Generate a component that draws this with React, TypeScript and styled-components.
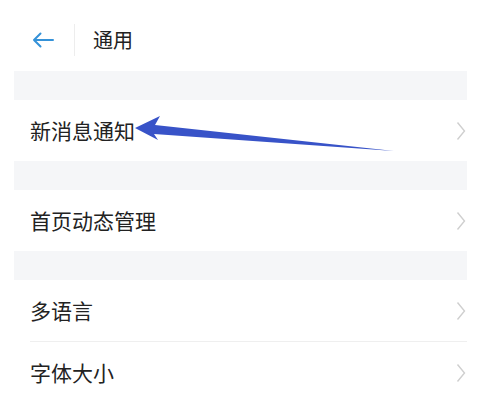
import React from 'react'
import styled, { createGlobalStyle } from 'styled-components'

const GlobalStyle = createGlobalStyle`
  html, body {
    margin: 0;
    padding: 0;
    background: #ffffff;
  }
  body {
    font-family: "Noto Sans CJK SC", "Noto Sans", sans-serif;
    color: #222222;
  }
`

const Page = styled.div`
  position: relative;
  width: 494px;
  height: 404px;
  overflow: hidden;
  background: #ffffff;
  padding: 0 27px 0 14px;
  box-sizing: border-box;
`

const Header = styled.div`
  display: flex;
  align-items: center;
  height: 71px;
  padding-top: 9px;
  box-sizing: border-box;
`

const BackButton = styled.div`
  display: flex;
  align-items: center;
  justify-content: center;
  width: 22px;
  margin-left: 18px;
`

const HeaderDivider = styled.div`
  width: 1px;
  height: 32px;
  background: #ededed;
  margin: 0 18px 0 20px;
`

const Title = styled.div`
  font-size: 20px;
  line-height: 1;
  color: #222222;
`

const Gap = styled.div`
  height: 29px;
  background: #f5f6f8;
`

const Group = styled.div`
  background: #ffffff;
`

const Row = styled.div<{ $divider?: boolean }>`
  display: flex;
  align-items: center;
  justify-content: space-between;
  height: 61px;
  margin-left: 16px;
  padding-right: 1px;
  border-bottom: ${p => (p.$divider ? '1px solid #efefef' : 'none')};
`

const Label = styled.div`
  font-size: 21px;
  line-height: 1;
  color: #222222;
`

const Overlay = styled.svg`
  position: absolute;
  left: 0;
  top: 0;
  pointer-events: none;
`

const Chevron = () => (
  <svg width="10" height="20" viewBox="0 0 10 20">
    <path d="M1.5 1.5 L8.5 10 L1.5 18.5" fill="none" stroke="#cfcfcf" strokeWidth="1.4" />
  </svg>
)

const BackArrow = () => (
  <svg width="22" height="16" viewBox="0 0 22 16">
    <path d="M21 8 H2 M8.5 1.5 L2 8 L8.5 14.5" fill="none" stroke="#3592d8" strokeWidth="2" strokeLinecap="round" strokeLinejoin="round" />
  </svg>
)

const App: React.FC = () => {
  return (
    <>
      <GlobalStyle />
      <Page>
        <Header>
          <BackButton>
            <BackArrow />
          </BackButton>
          <HeaderDivider />
          <Title>通用</Title>
        </Header>
        <Gap />
        <Group>
          <Row>
            <Label>新消息通知</Label>
            <Chevron />
          </Row>
        </Group>
        <Gap />
        <Group>
          <Row>
            <Label>首页动态管理</Label>
            <Chevron />
          </Row>
        </Group>
        <Gap />
        <Group>
          <Row $divider>
            <Label>多语言</Label>
            <Chevron />
          </Row>
          <Row>
            <Label>字体大小</Label>
            <Chevron />
          </Row>
        </Group>
        <Overlay width="494" height="404" viewBox="0 0 494 404">
          <polygon points="135,128 160,116 155,125 394,151 154,134 158,140" fill="#3853c8" />
        </Overlay>
      </Page>
    </>
  )
}

export default App
